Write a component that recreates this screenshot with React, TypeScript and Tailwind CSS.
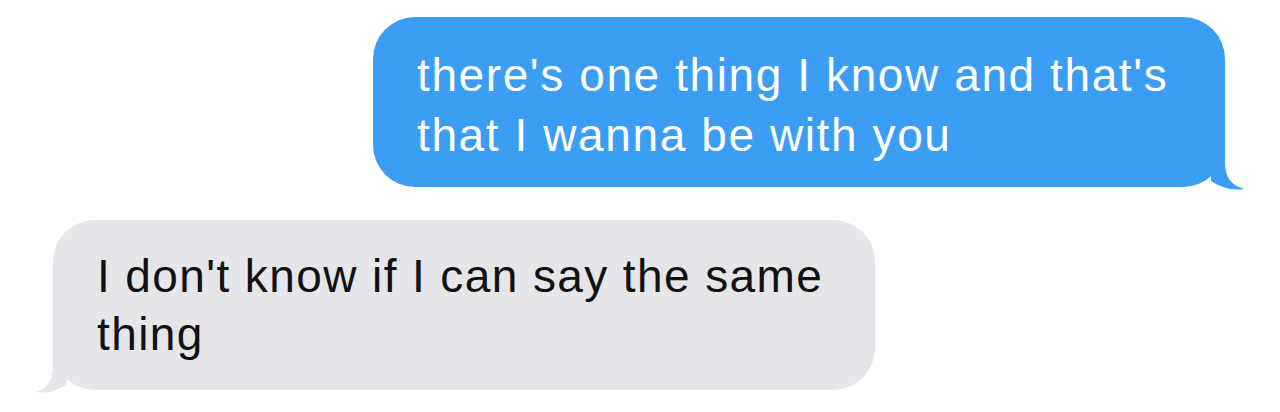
import React from "react";

export default function App() {
  return (
    <div
      className="w-[1280px] h-[412px] bg-white overflow-hidden flex flex-col"
      style={{ fontFamily: '"Liberation Sans", Arial, sans-serif' }}
    >
      <div className="flex justify-end pt-[17px] pr-[55px]">
        <div className="relative w-[852px] h-[170px] rounded-[42px] bg-[#3b9df3] pl-[44px] pt-[28px] text-white text-[46px] leading-[60px] tracking-[1.6px]">
          <div className="whitespace-nowrap">there's one thing I know and that's</div>
          <div className="whitespace-nowrap">that I wanna be with you</div>
          <svg
            className="absolute left-[820px] top-[120px]"
            width="60"
            height="60"
            viewBox="0 0 60 60"
          >
            <path
              d="M18 6 L32 6 L32 28 C33 41 38 48 51 52 C38 54 27 50 18 44 Z"
              fill="#3b9df3"
            />
          </svg>
        </div>
      </div>
      <div className="flex pt-[33px] pl-[53px]">
        <div className="relative w-[822px] h-[170px] rounded-[42px] bg-[#e5e5ea] pl-[44px] pt-[27px] text-[#111111] text-[46px] leading-[58px] tracking-[1.4px]">
          <div className="whitespace-nowrap">I don't know if I can say the same</div>
          <div className="whitespace-nowrap">thing</div>
          <svg
            className="absolute left-[-30px] top-[120px]"
            width="60"
            height="60"
            viewBox="0 0 60 60"
          >
            <path
              d="M42 6 L30 6 L30 28 C29 41 25 48 13 52 C26 54 35 50 44 44 Z"
              fill="#e5e5ea"
            />
          </svg>
        </div>
      </div>
    </div>
  );
}
